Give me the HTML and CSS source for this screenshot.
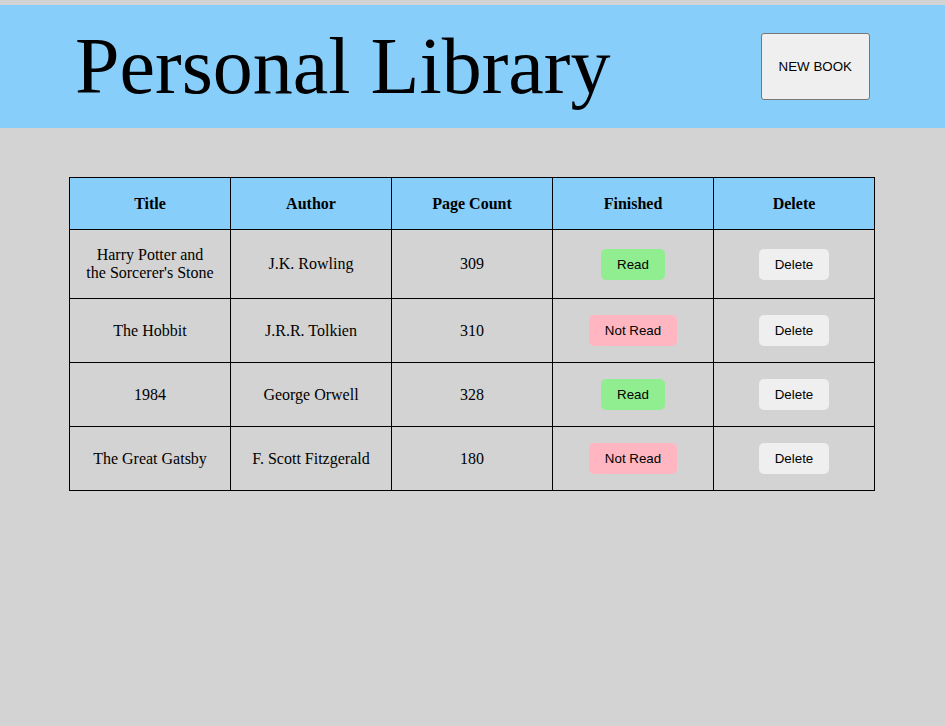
FILE: index.html
```html
<!DOCTYPE html>
<html>
<head>
<meta charset="utf-8">
<title>Personal Library</title>
<link rel="stylesheet" href="styles.css">
</head>
<body>
<header class="header">
  <h1 class="title">Personal Library</h1>
  <button class="new-book">NEW BOOK</button>
</header>
<main class="main">
  <table class="library">
    <thead>
      <tr><th>Title</th><th>Author</th><th>Page Count</th><th>Finished</th><th>Delete</th></tr>
    </thead>
    <tbody>
      <tr>
        <td>Harry Potter and<br>the Sorcerer's Stone</td>
        <td>J.K. Rowling</td>
        <td>309</td>
        <td><button class="status read">Read</button></td>
        <td><button class="del">Delete</button></td>
      </tr>
      <tr>
        <td>The Hobbit</td>
        <td>J.R.R. Tolkien</td>
        <td>310</td>
        <td><button class="status not-read">Not Read</button></td>
        <td><button class="del">Delete</button></td>
      </tr>
      <tr>
        <td>1984</td>
        <td>George Orwell</td>
        <td>328</td>
        <td><button class="status read">Read</button></td>
        <td><button class="del">Delete</button></td>
      </tr>
      <tr>
        <td>The Great Gatsby</td>
        <td>F. Scott Fitzgerald</td>
        <td>180</td>
        <td><button class="status not-read">Not Read</button></td>
        <td><button class="del">Delete</button></td>
      </tr>
    </tbody>
  </table>
</main>
</body>
</html>
```
FILE: styles.css
```css
html {
  margin: 0;
  padding: 0;
  background: #d3d3d3;
}
body {
  margin: 0;
  padding: 5px 0 0;
  width: calc(100% - 1px);
  min-height: 721px;
  background: #d3d3d3;
  font-family: "Liberation Serif", "Times New Roman", serif;
}
.header {
  height: 123px;
  background: #87cefa;
  display: flex;
  justify-content: space-around;
  align-items: center;
}
.title {
  margin: 0;
  font-size: 80px;
  font-weight: normal;
  line-height: normal;
  color: #000;
}
.new-book {
  font-family: "Liberation Sans", Arial, sans-serif;
  font-size: 13.333px;
  padding: 25px 17px;
  background: #efefef;
  border: 1px solid #767676;
  border-radius: 3px;
  color: #000;
  line-height: 15px;
}
.main {
  padding: 49px 1px 0 0;
}
.library {
  width: 806px;
  margin: 0 auto;
  border-collapse: collapse;
  table-layout: fixed;
  font-size: 16px;
}
.library th, .library td {
  border: 1px solid #000;
  padding: 16px;
  text-align: center;
  line-height: 18px;
  color: #000;
}
.library th {
  padding: 17px 16px 16px;
  background: #87cefa;
  font-weight: bold;
}
.status, .del {
  font-family: "Liberation Sans", Arial, sans-serif;
  font-size: 13.333px;
  line-height: 15px;
  padding: 8px 16px;
  border: none;
  border-radius: 5px;
  color: #000;
  vertical-align: middle;
}
.read { background: #90ee90; }
.not-read { background: #ffb6c1; }
.del { background: #efefef; }
```
